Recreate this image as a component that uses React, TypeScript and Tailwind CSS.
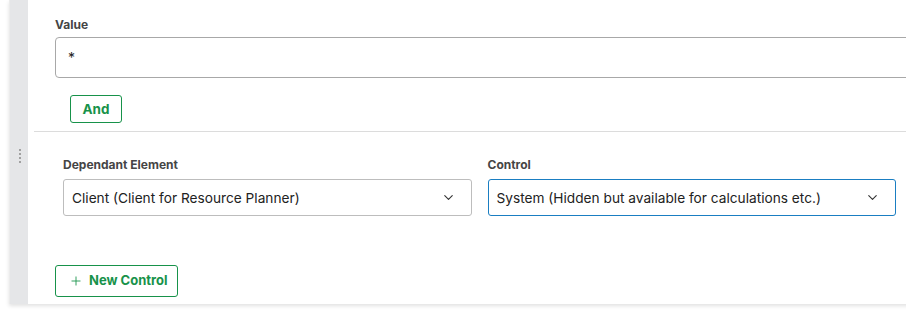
import React from 'react';
import { ChevronDown, Plus } from 'lucide-react';

const Label = ({ children }: { children: React.ReactNode }) => (
  <div className="text-[12px] leading-[16px] font-bold text-[#454545]">{children}</div>
);

const Select = ({ value, focused }: { value: string; focused?: boolean }) => (
  <div
    className={
      'flex h-[37px] items-center justify-between rounded-[3px] border bg-white pl-[8px] pr-[15px] text-[13.7px] text-[#222] ' +
      (focused ? 'border-[#1a7ec2]' : 'border-[#bdbdbd]')
    }
  >
    <span className="mt-[2px]">{value}</span>
    <ChevronDown className="h-[15px] w-[15px] text-[#333]" strokeWidth={1.8} />
  </div>
);

const App = () => {
  return (
    <div className="relative h-[330px] w-[906px] overflow-hidden bg-white font-['Inter',sans-serif]">
      {/* Card */}
      <div className="ml-[9px] flex w-[940px] border-l border-[#ececec] bg-white shadow-[0_2px_4px_rgba(0,0,0,0.12)]">
        {/* Drag strip */}
        <div className="flex w-[18px] shrink-0 flex-col items-center bg-[#e5e6e8] pt-[149px]">
          <div className="ml-[1px] flex flex-col gap-[2px]">
            <span className="h-[2px] w-[2px] rounded-full bg-[#8a8a8a]" />
            <span className="h-[2px] w-[2px] rounded-full bg-[#8a8a8a]" />
            <span className="h-[2px] w-[2px] rounded-full bg-[#8a8a8a]" />
            <span className="h-[2px] w-[2px] rounded-full bg-[#8a8a8a]" />
          </div>
        </div>

        <div className="flex-1 pt-[17px] pb-[7px]">
          {/* Value */}
          <div className="pl-[27px]">
            <Label>Value</Label>
            <div className="mt-[4px] flex h-[41px] items-center rounded-[4px] border border-[#a8a8a8] pl-[12px] text-[14px] text-[#222]">
              *
            </div>
            <button className="ml-[15px] mt-[17px] h-[28px] w-[52px] rounded-[3px] border border-[#17924a] text-[13.5px] font-bold text-[#17924a]">
              And
            </button>
          </div>

          <div className="ml-[6px] mt-[8px] h-px bg-[#dcdcdc]" />

          {/* Dependant */}
          <div className="mt-[25px] grid w-[868px] grid-cols-2 gap-[16px] pl-[35px]">
            <div>
              <Label>Dependant Element</Label>
              <div className="mt-[6px]">
                <Select value="Client (Client for Resource Planner)" />
              </div>
            </div>
            <div>
              <Label>Control</Label>
              <div className="mt-[6px]">
                <Select value="System (Hidden but available for calculations etc.)" focused />
              </div>
            </div>
          </div>

          <div className="pl-[27px]">
            <button className="mt-[49px] flex h-[32px] w-[123px] items-center gap-[6px] rounded-[3px] border border-[#17924a] pl-[13px] text-[13px] font-bold text-[#17924a]">
              <Plus className="h-[14px] w-[14px]" strokeWidth={1.5} />
              New Control
            </button>
          </div>
        </div>
      </div>
    </div>
  );
};

export default App;
